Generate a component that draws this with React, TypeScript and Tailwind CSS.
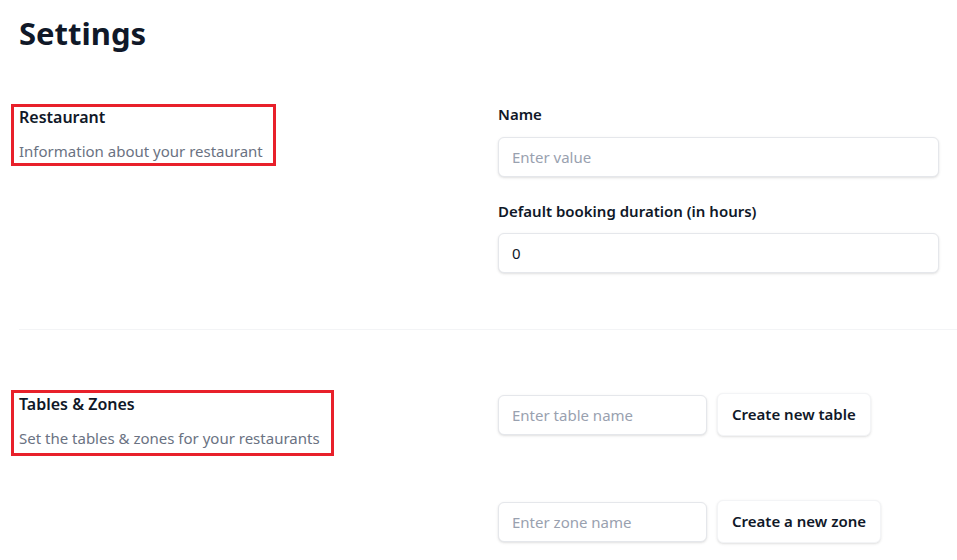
import React from 'react';

const font = { fontFamily: '"Noto Sans", "Open Sans", sans-serif' };

const SectionHeader = ({ title, text, width }: { title: string; text: string; width: string }) => (
  <div className={`-ml-[8px] border-[3px] border-[#e8202a] pl-[5px] ${width}`}>
    <h2 className="text-base font-semibold text-gray-900 leading-5">{title}</h2>
    <p className="mt-[12px] text-[15px] leading-6 text-gray-500">{text}</p>
  </div>
);

const Input = ({ placeholder, value, className }: { placeholder?: string; value?: string; className?: string }) => (
  <input
    className={`h-[40px] rounded-md border border-gray-200 bg-white px-[13px] text-[15px] text-gray-900 shadow-sm outline-none placeholder:text-gray-400 ${className ?? ''}`}
    placeholder={placeholder}
    defaultValue={value}
  />
);

const Button = ({ children }: { children: React.ReactNode }) => (
  <button className="h-[43px] rounded-md border border-gray-100 bg-white px-[14px] text-[15px] font-semibold text-gray-900 shadow-sm">
    {children}
  </button>
);

export default function App() {
  return (
    <div className="min-h-screen bg-white pl-[19px] pt-[15px]" style={font}>
      <h1 className="text-[31px] font-bold leading-[36px] text-gray-900">Settings</h1>

      <div className="mt-[53px] grid grid-cols-[479px_441px]">
        <div>
          <SectionHeader title="Restaurant" text="Information about your restaurant" width="w-[265px]" />
        </div>
        <div className="flex flex-col">
          <label className="text-[15px] font-semibold leading-6 text-gray-900 -mt-[2px]">Name</label>
          <Input placeholder="Enter value" className="mt-[11px] w-full" />
          <label className="mt-[22px] text-[15px] font-semibold leading-6 text-gray-900">
            Default booking duration (in hours)
          </label>
          <Input value="0" className="mt-[10px] w-full" />
        </div>
      </div>

      <div className="mt-[56px] border-t border-gray-100" />

      <div className="mt-[60px] grid grid-cols-[479px_441px]">
        <div>
          <div className="pb-0">
            <SectionHeader title="Tables & Zones" text="Set the tables & zones for your restaurants" width="w-[323px] pt-[1px] pb-[3px]" />
          </div>
        </div>
        <div className="flex flex-col gap-[64px]">
          <div className="flex items-center gap-[10px] pt-[3px]">
            <Input placeholder="Enter table name" className="w-[209px]" />
            <Button>Create new table</Button>
          </div>
          <div className="flex items-center gap-[10px]">
            <Input placeholder="Enter zone name" className="w-[209px]" />
            <Button>Create a new zone</Button>
          </div>
        </div>
      </div>
    </div>
  );
}
